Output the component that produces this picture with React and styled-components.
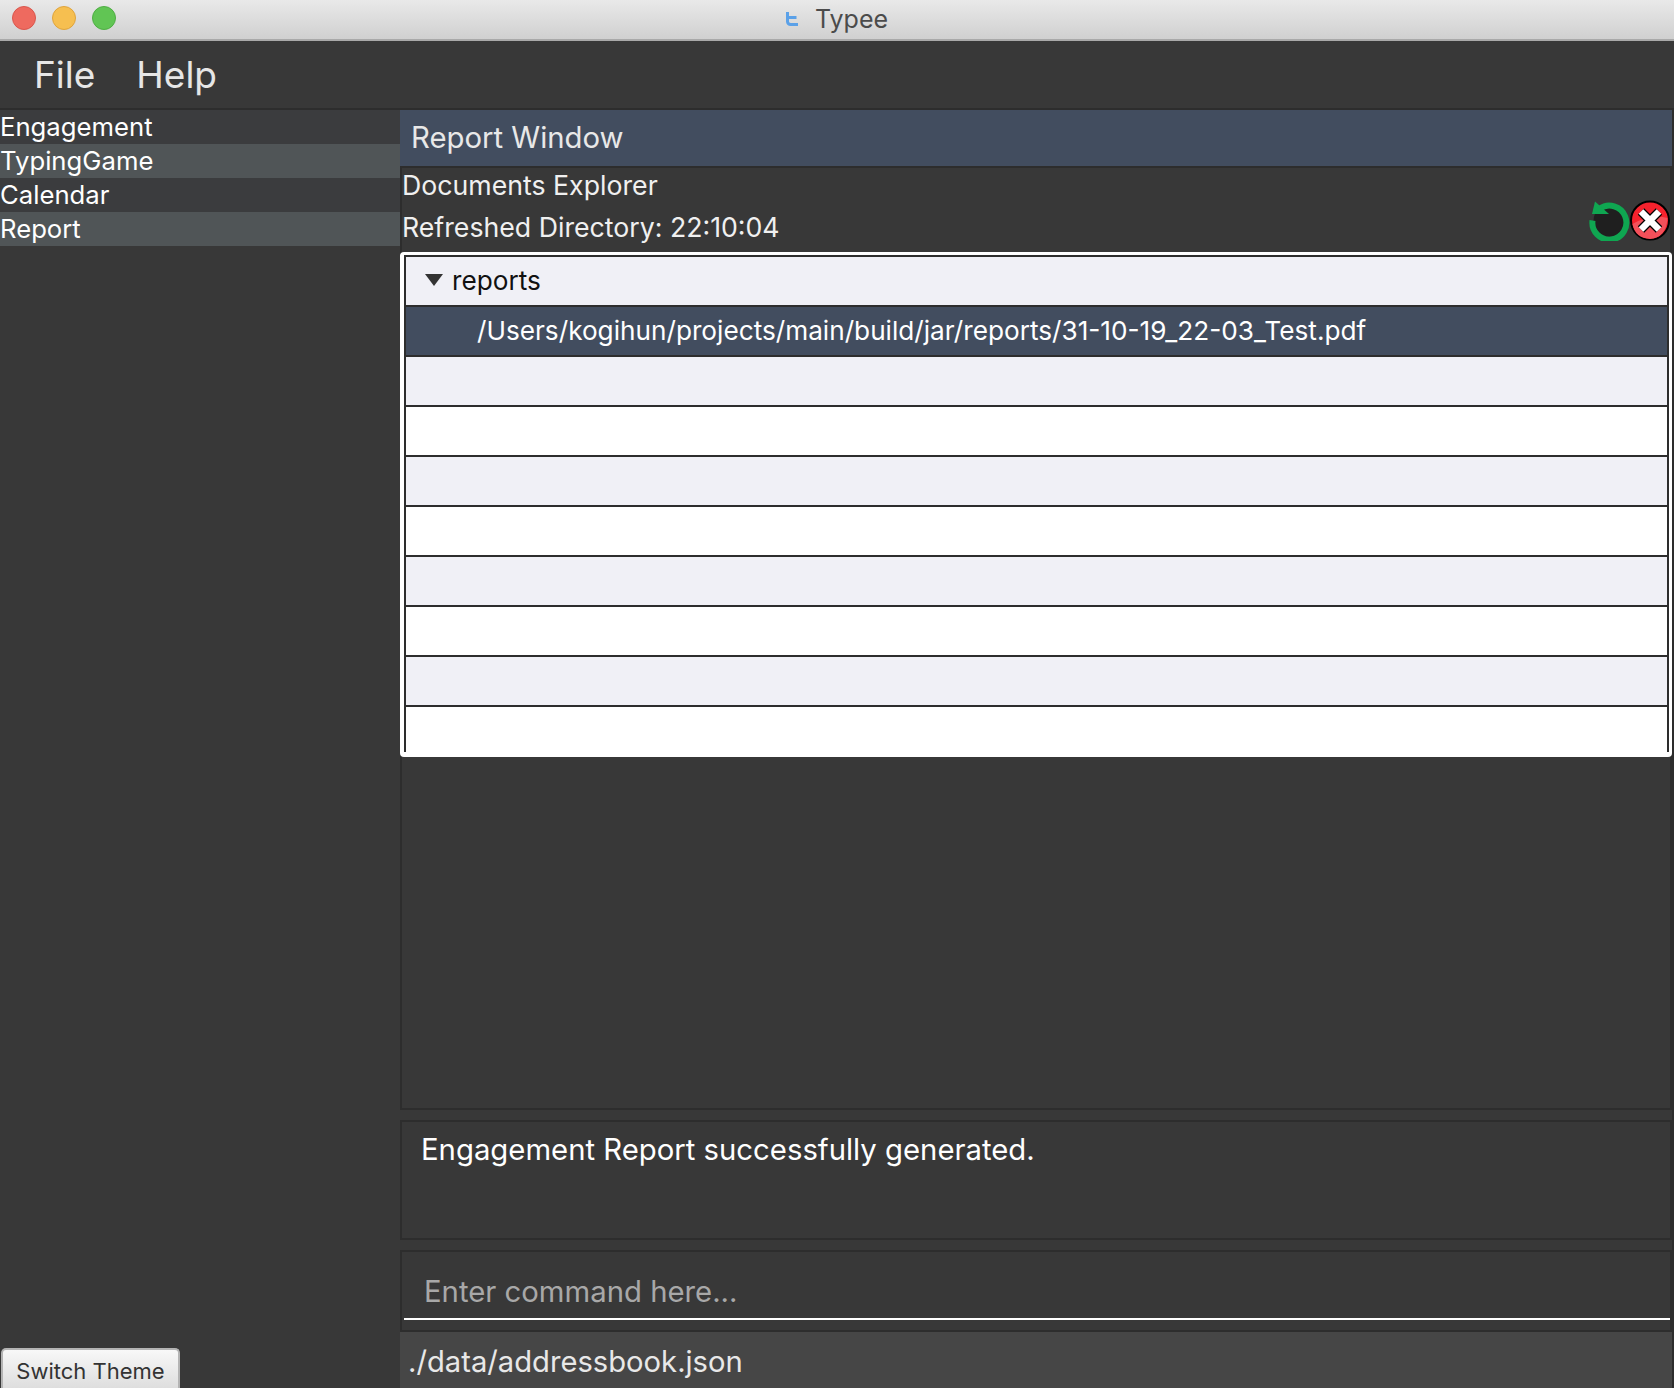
import styled, { createGlobalStyle } from "styled-components";

const GlobalStyle = createGlobalStyle`
  html, body {
    margin: 0;
    padding: 0;
    background: #383838;
  }
  * {
    box-sizing: border-box;
  }
`;

const Window = styled.div`
  width: 1674px;
  height: 1388px;
  display: flex;
  flex-direction: column;
  overflow: hidden;
  background: #383838;
  font-family: Inter, "Liberation Sans", sans-serif;
  color: #fff;
`;

const TitleBar = styled.div`
  position: relative;
  flex: 0 0 41px;
  display: flex;
  align-items: center;
  justify-content: center;
  gap: 17px;
  padding-bottom: 2px;
  background: linear-gradient(#e9e9e9, #d0d0d0);
  border-bottom: 2px solid #a9a9a9;
  color: #4b4b4b;
  font-size: 25px;
`;

const Lights = styled.div`
  position: absolute;
  left: 12px;
  top: 6px;
  display: flex;
  gap: 16px;
`;

const Light = styled.span`
  width: 24px;
  height: 24px;
  border-radius: 50%;
  background: ${(p) => p.$color};
  border: 1px solid ${(p) => p.$edge};
`;

const MenuBar = styled.div`
  flex: 0 0 69px;
  display: flex;
  align-items: center;
  gap: 41px;
  padding: 0 0 0 34px;
  border-bottom: 2px solid #2d2d2d;
  color: #e6e6e6;
  font-size: 37px;
`;

const Body = styled.div`
  flex: 1;
  display: flex;
  min-height: 0;
`;

const Sidebar = styled.div`
  flex: 0 0 400px;
  display: flex;
  flex-direction: column;
  justify-content: space-between;
`;

const NavList = styled.div`
  display: flex;
  flex-direction: column;
`;

const NavItem = styled.div`
  height: 34px;
  line-height: 34px;
  font-size: 25.7px;
  background: ${(p) => (p.$alt ? "#505557" : "#3b3c3e")};
`;

const ThemeButton = styled.button`
  width: 179px;
  height: 40px;
  margin-left: 1px;
  padding: 3px 0 0;
  border: 2px solid #b4b4b4;
  border-bottom: none;
  border-radius: 5px 5px 0 0;
  background: linear-gradient(#f8f8f8, #dedede);
  color: #333;
  font-family: inherit;
  font-size: 22px;
`;

const Main = styled.div`
  flex: 1;
  min-width: 0;
  display: flex;
  flex-direction: column;
  border-right: 2px solid #2d2d2d;
`;

const ReportHeader = styled.div`
  flex: 0 0 58px;
  display: flex;
  align-items: center;
  padding: 0 0 2px 11px;
  background: #424d5f;
  border-bottom: 2px solid #2d2d2d;
  color: #e8e8e8;
  font-size: 29.3px;
`;

const ReportPanel = styled.div`
  flex: 0 0 942px;
  display: flex;
  flex-direction: column;
  border: 2px solid #2d2d2d;
  border-top: none;
`;

const ExplorerHead = styled.div`
  position: relative;
  height: 84px;
  font-size: 26.7px;
  color: #f0f0f0;
`;

const HeadLine = styled.div`
  height: 42px;
  line-height: 42px;
  transform: translateY(-4px);
`;

const ActionIcons = styled.div`
  position: absolute;
  right: 0;
  top: 32px;
  display: flex;
`;

const TreeFrame = styled.div`
  height: 505px;
  margin: 0 -2px;
  padding: 3px 3px 0 4px;
  background: #fff;
  border-radius: 4px;
`;

const Tree = styled.div`
  height: 497px;
  border-left: 2px solid #2d2d2d;
  border-right: 2px solid #2d2d2d;
  border-top: 2px solid #2d2d2d;
  overflow: hidden;
`;

const TreeRow = styled.div`
  height: 50px;
  display: flex;
  align-items: center;
  gap: 9px;
  padding-left: ${(p) => p.$indent}px;
  padding-bottom: 2px;
  font-size: 26.200px;
  border-bottom: 2px solid #2d2d2d;
  background: ${(p) => (p.$selected ? "#424d5f" : p.$odd ? "#f0f0f6" : "#fff")};
  color: ${(p) => (p.$selected ? "#fff" : "#111")};
`;

const Arrow = styled.span`
  width: 0;
  height: 0;
  border-left: 9px solid transparent;
  border-right: 9px solid transparent;
  border-top: 12px solid #333;
`;

const ResultBox = styled.div`
  flex: 0 0 120px;
  margin-top: 10px;
  padding: 10px 0 0 19px;
  border: 2px solid #2d2d2d;
  font-size: 29.300px;
`;

const CommandBox = styled.div`
  flex: 0 0 82px;
  margin-top: 10px;
  padding: 0 0 10px 2px;
  display: flex;
  flex-direction: column;
  justify-content: flex-end;
  border: 2px solid #2d2d2d;
`;

const CommandInput = styled.div`
  height: 50px;
  padding-left: 20px;
  border-bottom: 2px solid #fff;
  color: #a8a8a8;
  font-size: 29.300px;
  line-height: 44px;
`;

const StatusBar = styled.div`
  flex: 1;
  padding-left: 8px;
  background: #464646;
  color: #e8e8e8;
  font-size: 29.200px;
  line-height: 60px;
`;

function AppLogo() {
  return (
    <svg width="12" height="14" viewBox="0 0 12 14">
      <path d="M1.500 0v9.500a3 3 0 0 0 3 3H12M1.500 5.500H10.500" fill="none" stroke="#5ba1e8" strokeWidth="3" />
    </svg>
  );
}

function RefreshIcon() {
  return (
    <svg width="41" height="41" viewBox="0 0 41 41">
      <circle cx="20.500" cy="20.500" r="16" fill="#1f1f1f" />
      <path d="M10.500 8.800A17 17 0 1 1 3.500 20.500" fill="none" stroke="#0fa651" strokeWidth="6" />
      <path d="M6 1.500L20 14H3z" fill="#0fa651" />
    </svg>
  );
}

function CloseIcon() {
  return (
    <svg width="40" height="41" viewBox="0 0 40 41">
      <circle cx="20" cy="20.500" r="19" fill="#f5222d" stroke="#000" strokeWidth="2" />
      <path d="M2.500 24Q20 14 37.500 18 36 38 20 39 5 38 2.500 24z" fill="#f4505a" />
      <path d="M11 11.500l18 18M29 11.500l-18 18" stroke="#000" strokeWidth="9" />
      <path d="M11 11.500l18 18M29 11.500l-18 18" stroke="#fff" strokeWidth="6.500" />
    </svg>
  );
}

const navItems = ["Engagement", "TypingGame", "Calendar", "Report"];
const emptyRows = [2, 3, 4, 5, 6, 7, 8, 9];

export default function App() {
  return (
    <Window>
      <GlobalStyle />
      <TitleBar>
        <Lights>
          <Light $color="#ee6a5f" $edge="#d9574d" />
          <Light $color="#f6bf50" $edge="#dfa43d" />
          <Light $color="#61c554" $edge="#4fae44" />
        </Lights>
        <AppLogo />
        <span>Typee</span>
      </TitleBar>
      <MenuBar>
        <span>File</span>
        <span>Help</span>
      </MenuBar>
      <Body>
        <Sidebar>
          <NavList>
            {navItems.map((item, i) => (
              <NavItem key={item} $alt={i % 2 === 1}>{item}</NavItem>
            ))}
          </NavList>
          <ThemeButton>Switch Theme</ThemeButton>
        </Sidebar>
        <Main>
          <ReportHeader>Report Window</ReportHeader>
          <ReportPanel>
            <ExplorerHead>
              <HeadLine>Documents Explorer</HeadLine>
              <HeadLine>Refreshed Directory: 22:10:04</HeadLine>
              <ActionIcons>
                <RefreshIcon />
                <CloseIcon />
              </ActionIcons>
            </ExplorerHead>
            <TreeFrame>
              <Tree>
                <TreeRow $indent={19} $odd>
                  <Arrow />
                  <span>reports</span>
                </TreeRow>
                <TreeRow $indent={71} $selected>
                  /Users/kogihun/projects/main/build/jar/reports/31-10-19_22-03_Test.pdf
                </TreeRow>
                {emptyRows.map((n) => (
                  <TreeRow key={n} $odd={n % 2 === 0} />
                ))}
              </Tree>
            </TreeFrame>
          </ReportPanel>
          <ResultBox>Engagement Report successfully generated.</ResultBox>
          <CommandBox>
            <CommandInput>Enter command here...</CommandInput>
          </CommandBox>
          <StatusBar>./data/addressbook.json</StatusBar>
        </Main>
      </Body>
    </Window>
  );
}
